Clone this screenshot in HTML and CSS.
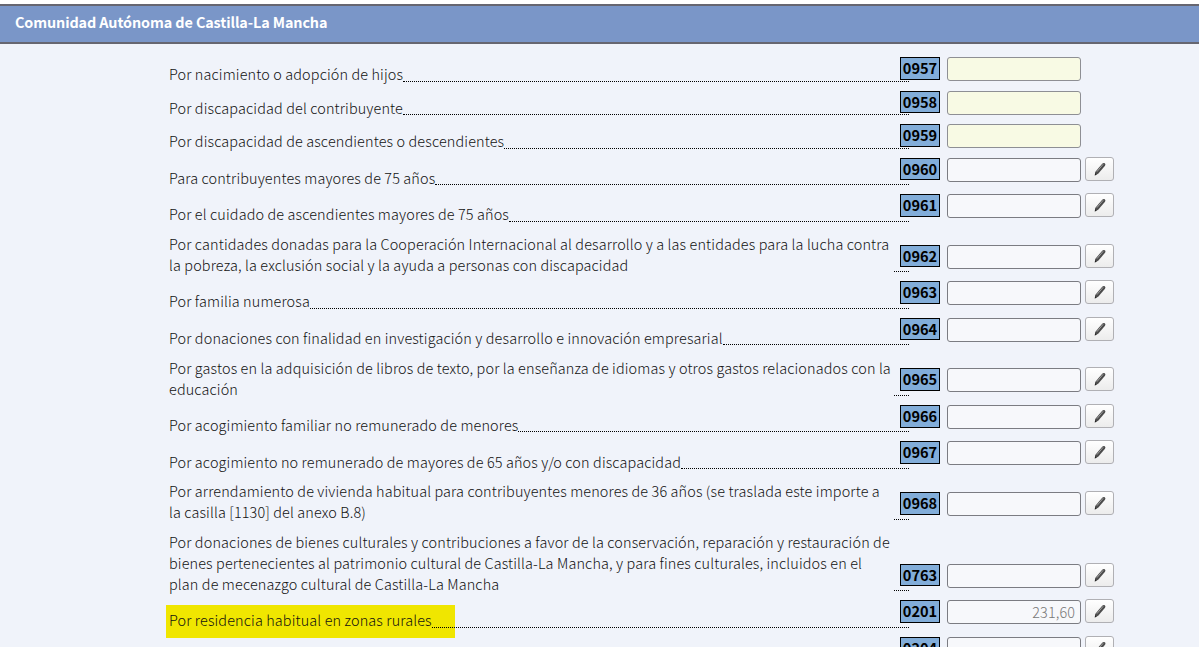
FILE: index.html
```html
<!DOCTYPE html>
<html lang="es">
<head>
    <meta charset="UTF-8">
    <meta name="viewport" content="width=device-width, initial-scale=1.0">
    <title>Comunidad Autónoma de Castilla-La Mancha</title>
    <link rel="stylesheet" href="styles.css">
</head>
<body>
    <svg class="sprite" aria-hidden="true">
        <symbol id="pencil" viewBox="0 0 12 14">
            <path d="M0.8 13.4 L1.2 10 L8.2 1.8 Q9.4 0.4 10.8 1.2 Q12 2.2 11 3.8 L4.2 11.8 Z" fill="#4c4c4c"/>
            <path d="M2.9 9.7 L9.2 2.2" stroke="#a0a0a0" stroke-width="1" fill="none"/>
            <path d="M0.8 13.4 L1.1 11.2 L2.7 12.5 Z" fill="#222"/>
        </symbol>
    </svg>

    <h1 class="title">Comunidad Autónoma de Castilla-La Mancha</h1>

    <form class="rows">
        <div class="row short">
            <div class="concept"><label class="label">Por nacimiento o adopción de hijos</label><span class="leader"></span></div>
            <span class="code">0957</span>
            <input class="amount calc" type="text">
        </div>
        <div class="row short">
            <div class="concept"><label class="label">Por discapacidad del contribuyente</label><span class="leader"></span></div>
            <span class="code">0958</span>
            <input class="amount calc" type="text">
        </div>
        <div class="row short">
            <div class="concept"><label class="label">Por discapacidad de ascendientes o descendientes</label><span class="leader"></span></div>
            <span class="code">0959</span>
            <input class="amount calc" type="text">
        </div>
        <div class="row">
            <div class="concept"><label class="label">Para contribuyentes mayores de 75 años</label><span class="leader"></span></div>
            <span class="code">0960</span>
            <input class="amount" type="text">
            <button class="edit" type="button"><svg><use href="#pencil"/></svg></button>
        </div>
        <div class="row">
            <div class="concept"><label class="label">Por el cuidado de ascendientes mayores de 75 años</label><span class="leader"></span></div>
            <span class="code">0961</span>
            <input class="amount" type="text">
            <button class="edit" type="button"><svg><use href="#pencil"/></svg></button>
        </div>
        <div class="row two-lines">
            <div class="concept"><label class="label">Por cantidades donadas para la Cooperación Internacional al desarrollo y a las entidades para la lucha contra<br>la pobreza, la exclusión social y la ayuda a personas con discapacidad</label><span class="leader"></span></div>
            <span class="code">0962</span>
            <input class="amount" type="text">
            <button class="edit" type="button"><svg><use href="#pencil"/></svg></button>
        </div>
        <div class="row">
            <div class="concept"><label class="label">Por familia numerosa</label><span class="leader"></span></div>
            <span class="code">0963</span>
            <input class="amount" type="text">
            <button class="edit" type="button"><svg><use href="#pencil"/></svg></button>
        </div>
        <div class="row">
            <div class="concept"><label class="label">Por donaciones con finalidad en investigación y desarrollo e innovación empresarial</label><span class="leader"></span></div>
            <span class="code">0964</span>
            <input class="amount" type="text">
            <button class="edit" type="button"><svg><use href="#pencil"/></svg></button>
        </div>
        <div class="row two-lines">
            <div class="concept"><label class="label">Por gastos en la adquisición de libros de texto, por la enseñanza de idiomas y otros gastos relacionados con la<br>educación</label><span class="leader"></span></div>
            <span class="code">0965</span>
            <input class="amount" type="text">
            <button class="edit" type="button"><svg><use href="#pencil"/></svg></button>
        </div>
        <div class="row">
            <div class="concept"><label class="label">Por acogimiento familiar no remunerado de menores</label><span class="leader"></span></div>
            <span class="code">0966</span>
            <input class="amount" type="text">
            <button class="edit" type="button"><svg><use href="#pencil"/></svg></button>
        </div>
        <div class="row">
            <div class="concept"><label class="label">Por acogimiento no remunerado de mayores de 65 años y/o con discapacidad</label><span class="leader"></span></div>
            <span class="code">0967</span>
            <input class="amount" type="text">
            <button class="edit" type="button"><svg><use href="#pencil"/></svg></button>
        </div>
        <div class="row two-lines">
            <div class="concept"><label class="label">Por arrendamiento de vivienda habitual para contribuyentes menores de 36 años (se traslada este importe a<br>la casilla [1130] del anexo B.8)</label><span class="leader"></span></div>
            <span class="code">0968</span>
            <input class="amount" type="text">
            <button class="edit" type="button"><svg><use href="#pencil"/></svg></button>
        </div>
        <div class="row three-lines">
            <div class="concept"><label class="label">Por donaciones de bienes culturales y contribuciones a favor de la conservación, reparación y restauración de<br>bienes pertenecientes al patrimonio cultural de Castilla-La Mancha, y para fines culturales, incluidos en el<br>plan de mecenazgo cultural de Castilla-La Mancha</label><span class="leader"></span></div>
            <span class="code">0763</span>
            <input class="amount" type="text">
            <button class="edit" type="button"><svg><use href="#pencil"/></svg></button>
        </div>
        <div class="row">
            <div class="concept marked"><label class="label">Por residencia habitual en zonas rurales</label><span class="leader"></span></div>
            <span class="code">0201</span>
            <input class="amount" type="text" value="231,60">
            <button class="edit" type="button"><svg><use href="#pencil"/></svg></button>
        </div>
        <div class="row">
            <div class="concept"><span class="leader"></span></div>
            <span class="code">0204</span>
            <input class="amount" type="text">
            <button class="edit" type="button"><svg><use href="#pencil"/></svg></button>
        </div>
    </form>
</body>
</html>
```

FILE: styles.css
```css
* {
    box-sizing: border-box;
}
html {
    background: #fff;
}
body {
    margin: 0;
    height: 647px;
    padding-top: 4px;
    overflow: hidden;
    font-family: "Noto Sans CJK SC", "Open Sans", sans-serif;
    font-size: 14.4px;
    color: #111;
}
.sprite {
    display: none;
}
.title {
    margin: 0;
    height: 40px;
    padding-left: 15px;
    border-top: 2px solid #666670;
    border-bottom: 2px solid #666670;
    background: #7a96c8;
    color: #fff;
    font-size: 14.4px;
    font-weight: 700;
    letter-spacing: -0.11px;
    line-height: 32px;
}
.rows {
    height: 603px;
    padding: 4.2px 0 0 169px;
    background: #f0f3fa;
}
.row {
    display: flex;
    align-items: flex-end;
    height: 36.5px;
}
.row.short {
    height: 33.5px;
}
.row.two-lines {
    height: 50.65px;
}
.row.three-lines {
    height: 71.7px;
}
.concept {
    position: relative;
    z-index: 0;
    display: flex;
    align-items: flex-end;
    width: 740px;
    margin-right: -9px;
}
.label {
    font-weight: 300;
    letter-spacing: 0.14px;
    line-height: 21px;
    margin-bottom: -2.6px;
    white-space: nowrap;
}
.two-lines .label,
.three-lines .label {
    width: 725px;
}
.leader {
    flex: 1;
    min-width: 15px;
    border-bottom: 1px dotted #000;
}
.marked::before {
    content: "";
    position: absolute;
    z-index: -1;
    left: -3px;
    bottom: -10px;
    width: 289px;
    height: 33px;
    background: #f0e600;
}
.code {
    position: relative;
    z-index: 1;
    width: 40px;
    height: 22.6px;
    margin: 0 7px 4.9px 0;
    border: 1px solid #000;
    background: #82add9;
    color: #000;
    font-size: 14.6px;
    font-weight: 700;
    line-height: 19px;
    text-align: center;
}
.amount {
    width: 134px;
    height: 24px;
    margin: 0 4px 3.7px 0;
    padding: 0 5px 1px;
    border: 1px solid #7b7c82;
    border-radius: 3px;
    background: #f7f8fb;
    color: #777;
    font-family: inherit;
    font-size: 14.4px;
    font-weight: 300;
    letter-spacing: 0.1px;
    text-align: right;
}
.amount.calc {
    border-color: #8e8f94;
    background: #f8fae4;
}
.short .code {
    margin-bottom: 1.8px;
}
.short .amount {
    margin-bottom: 0.6px;
}
.edit {
    display: flex;
    align-items: center;
    justify-content: center;
    width: 29px;
    height: 24px;
    margin: 0 0 4.7px;
    padding: 0;
    border: 1px solid #b0b0b4;
    border-radius: 3px;
    background: linear-gradient(#fff, #ececec);
}
.edit svg {
    width: 12px;
    height: 14px;
}
```
